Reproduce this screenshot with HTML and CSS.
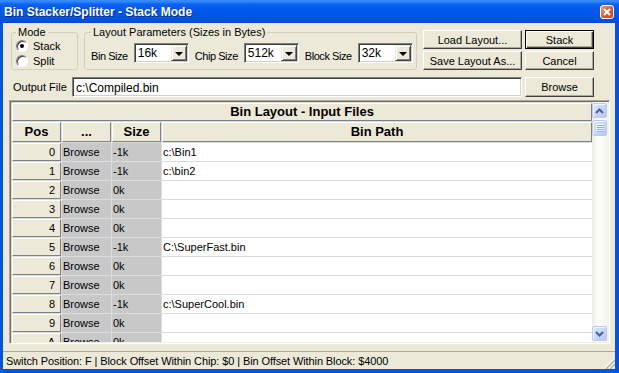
FILE: index.html
```html
<!DOCTYPE html>
<html lang="en">

<head>
    <meta charset="UTF-8">
    <title>Bin Stacker/Splitter - Stack Mode</title>
    <link rel="stylesheet" href="styles.css">
</head>

<body>
    <div class="window">
        <div class="titlebar">
            <span class="title">Bin Stacker/Splitter - Stack Mode</span>
            <span class="close">
                <svg width="12" height="12" viewBox="0 0 12 12">
                    <path d="M3 3 L9 9 M9 3 L3 9" stroke="#fff" stroke-width="2" fill="none" />
                </svg>
            </span>
        </div>

        <div class="client">
            <div class="top">
                <fieldset class="group mode">
                    <legend>Mode</legend>
                    <label class="radio"><span class="dot checked"></span>Stack</label>
                    <label class="radio"><span class="dot"></span>Split</label>
                </fieldset>

                <fieldset class="group params">
                    <legend>Layout Parameters (Sizes in Bytes)</legend>
                    <div class="param-row">
                        <span class="param-label">Bin Size</span>
                        <div class="combo"><span class="val">16k</span><span class="drop"></span></div>
                        <span class="param-label">Chip Size</span>
                        <div class="combo"><span class="val">512k</span><span class="drop"></span></div>
                        <span class="param-label">Block Size</span>
                        <div class="combo"><span class="val">32k</span><span class="drop"></span></div>
                    </div>
                </fieldset>

                <div class="actions">
                    <button class="btn">Load Layout...</button>
                    <button class="btn default">Stack</button>
                    <button class="btn">Save Layout As...</button>
                    <button class="btn">Cancel</button>
                </div>
            </div>

            <div class="output">
                <span class="output-label">Output File</span>
                <div class="field">c:\Compiled.bin</div>
                <button class="btn browse">Browse</button>
            </div>

            <div class="gridframe">
                <div class="grid">
                    <div class="caption">Bin Layout - Input Files</div>
                    <div class="row head">
                        <div>Pos</div>
                        <div>...</div>
                        <div>Size</div>
                        <div>Bin Path</div>
                    </div>
                    <div class="row"><div class="pos">0</div><div class="gray">Browse</div><div class="gray">-1k</div><div class="path">c:\Bin1</div></div>
                    <div class="row"><div class="pos">1</div><div class="gray">Browse</div><div class="gray">-1k</div><div class="path">c:\bin2</div></div>
                    <div class="row"><div class="pos">2</div><div class="gray">Browse</div><div class="gray">0k</div><div class="path"></div></div>
                    <div class="row"><div class="pos">3</div><div class="gray">Browse</div><div class="gray">0k</div><div class="path"></div></div>
                    <div class="row"><div class="pos">4</div><div class="gray">Browse</div><div class="gray">0k</div><div class="path"></div></div>
                    <div class="row"><div class="pos">5</div><div class="gray">Browse</div><div class="gray">-1k</div><div class="path">C:\SuperFast.bin</div></div>
                    <div class="row"><div class="pos">6</div><div class="gray">Browse</div><div class="gray">0k</div><div class="path"></div></div>
                    <div class="row"><div class="pos">7</div><div class="gray">Browse</div><div class="gray">0k</div><div class="path"></div></div>
                    <div class="row"><div class="pos">8</div><div class="gray">Browse</div><div class="gray">-1k</div><div class="path">c:\SuperCool.bin</div></div>
                    <div class="row"><div class="pos">9</div><div class="gray">Browse</div><div class="gray">0k</div><div class="path"></div></div>
                    <div class="row"><div class="pos">A</div><div class="gray">Browse</div><div class="gray">0k</div><div class="path"></div></div>
                </div>

                <div class="vscroll">
                    <span class="sbtn">
                        <svg width="9" height="6" viewBox="0 0 9 6"><path d="M1 5 L4.5 1.5 L8 5" stroke="#4D6185" stroke-width="2" fill="none" /></svg>
                    </span>
                    <span class="thumb">
                        <svg width="8" height="8" viewBox="0 0 8 8">
                            <path d="M0 0.5 H8 M0 2.5 H8 M0 4.5 H8 M0 6.5 H8" stroke="#EEF4FE" stroke-width="1" />
                            <path d="M1 1.5 H8 M1 3.5 H8 M1 5.5 H8 M1 7.5 H8" stroke="#8CB0F8" stroke-width="1" />
                        </svg>
                    </span>
                    <span class="track"></span>
                    <span class="sbtn">
                        <svg width="9" height="6" viewBox="0 0 9 6"><path d="M1 1 L4.5 4.5 L8 1" stroke="#4D6185" stroke-width="2" fill="none" /></svg>
                    </span>
                </div>
            </div>

            <div class="status">
                <span class="status-text">Switch Position: F | Block Offset Within Chip: $0 | Bin Offset Within Block: $4000</span>
                <svg class="grip" width="12" height="12" viewBox="0 0 12 12">
                    <path d="M11 2 L2 11 M11 6 L6 11 M11 10 L10 11" stroke="#fff" stroke-width="1" />
                    <path d="M12 3 L3 12 M12 7 L7 12" stroke="#ACA899" stroke-width="1.2" />
                </svg>
            </div>
        </div>
    </div>
</body>

</html>
```

FILE: styles.css
```css
body {
    margin: 0;
    font-family: "Liberation Sans", Arial, sans-serif;
    font-size: 11px;
    color: #000;
}

.window {
    width: 619px;
    height: 373px;
    display: flex;
    flex-direction: column;
    background: #0054E3;
    overflow: hidden;
}

.titlebar {
    height: 23px;
    flex: none;
    display: flex;
    align-items: center;
    justify-content: space-between;
    padding: 1px 5px 0 4px;
    box-sizing: border-box;
    background: linear-gradient(#3A8DFB 0, #2C83FA 2px, #0E63F2 4px, #0058EE 9px, #0055E6 17px, #004BDD 23px);
    color: white;
}

.title {
    font-weight: bold;
    font-size: 12px;
    text-shadow: 1px 1px #0A2B8C;
}

.close {
    width: 12px;
    height: 12px;
    border: 1px solid white;
    border-radius: 3px;
    display: flex;
    background: linear-gradient(135deg, #F2A488 0, #E2603A 45%, #C9401A 100%);
}

.client {
    flex: 1;
    margin: 0 4px 4px 3px;
    background: #ECE9D8;
    display: flex;
    flex-direction: column;
}

/* top controls */

.top {
    display: flex;
    align-items: flex-start;
    margin: 3px 0 0 8px;
    height: 44px;
}

.group {
    margin: 0;
    border: 1px solid #D0D0BF;
    border-radius: 3px;
    height: 44px;
    box-sizing: border-box;
    min-width: 0;
}

.group legend {
    padding: 0 2px;
    line-height: 13px;
}

.mode {
    width: 67px;
    padding: 0 4px;
}

.params {
    width: 333px;
    margin-left: 6px;
    padding: 0 6px;
}

.radio {
    display: flex;
    align-items: center;
    gap: 5px;
    height: 15px;
}

.radio:first-of-type {
    margin-top: -1px;
}

.dot {
    width: 12px;
    height: 12px;
    box-sizing: border-box;
    border-radius: 50%;
    border: 1px solid;
    border-color: #808080 #fff #fff #808080;
    background: white;
    box-shadow: inset 1px 1px #404040;
    display: flex;
    align-items: center;
    justify-content: center;
}

.dot.checked::after {
    content: "";
    width: 4px;
    height: 4px;
    border-radius: 50%;
    background: black;
}

.param-row {
    display: flex;
    align-items: flex-end;
    margin-top: 4px;
}

.param-label {
    flex: none;
    white-space: nowrap;
    line-height: 13px;
    letter-spacing: -0.45px;
    margin-right: 6px;
}

.combo {
    flex: none;
    width: 55px;
    height: 20px;
    box-sizing: border-box;
    border: 1px solid;
    border-color: #808080 #fff #fff #808080;
    box-shadow: inset 1px 1px #404040, inset -1px -1px #D4D0C8;
    background: white;
    display: flex;
    align-items: center;
    padding: 1px;
    margin-right: 6px;
}

.combo:last-child {
    margin-right: 0;
}

.combo .val {
    flex: 1;
    padding-left: 2px;
    font-size: 12px;
}

.drop {
    width: 16px;
    height: 16px;
    box-sizing: border-box;
    background: #ECE9D8;
    border: 1px solid;
    border-color: #ECE9D8 #404040 #404040 #ECE9D8;
    box-shadow: inset 1px 1px #fff, inset -1px -1px #808080;
    display: flex;
    align-items: center;
    justify-content: center;
}

.drop::after {
    content: "";
    border-left: 4px solid transparent;
    border-right: 4px solid transparent;
    border-top: 4px solid black;
    margin-top: 1px;
}

.actions {
    display: grid;
    grid-template-columns: 99px 69px;
    grid-template-rows: 19px 19px;
    gap: 2px 3px;
    margin: 4px 0 0 6px;
}

.btn {
    font: inherit;
    color: black;
    background: #ECE9D8;
    border: 1px solid;
    border-color: #fff #404040 #404040 #fff;
    box-shadow: inset -1px -1px #ACA899;
    padding: 0;
    height: 19px;
}

.btn.default {
    border-color: black;
    box-shadow: inset 1px 1px #fff, inset -1px -1px #404040, inset -2px -2px #ACA899;
}

/* output file */

.output {
    display: flex;
    align-items: center;
    margin: 7px 0 0 10px;
    height: 20px;
}

.output-label {
    width: 59px;
}

.field {
    width: 450px;
    height: 20px;
    box-sizing: border-box;
    border: 1px solid;
    border-color: #808080 #fff #fff #808080;
    box-shadow: inset 1px 1px #404040, inset -1px -1px #D4D0C8;
    background: white;
    padding: 3px 3px;
    font-size: 12px;
}

.browse {
    width: 69px;
    height: 20px;
    margin-left: 3px;
}

/* grid */

.gridframe {
    margin: 3px 5px 0 6px;
    height: 244px;
    box-sizing: border-box;
    border: 1px solid;
    border-color: #ACA899 #fff #fff #ACA899;
    box-shadow: inset 1px 1px #716F64, inset -1px -1px #F1EFE2;
    padding: 1px;
    display: flex;
}

.grid {
    flex: 1;
    display: flex;
    flex-direction: column;
    gap: 1px;
    padding: 1px 0 0 1px;
    background: #DCDCDC;
    overflow: hidden;
}

.caption,
.row.head div,
.pos {
    background: #ECE9D8;
    border: 1px solid;
    border-color: #fff #808080 #808080 #fff;
    box-sizing: border-box;
}

.caption {
    flex: none;
    height: 18px;
    line-height: 16px;
    text-align: center;
    font-weight: bold;
    font-size: 13px;
}

.row {
    flex: none;
    display: grid;
    grid-template-columns: 49px 49px 49px 1fr;
    column-gap: 1px;
    height: 18px;
    line-height: 18px;
}

.row.head {
    height: 20px;
}

.row.head div {
    text-align: center;
    font-weight: bold;
    font-size: 13px;
    line-height: 18px;
}

.pos {
    text-align: right;
    padding-right: 5px;
    line-height: 16px;
}

.gray {
    background: #C8C8C8;
    padding-left: 1px;
}

.path {
    background: white;
    padding-left: 1px;
}

/* scrollbar */

.vscroll {
    width: 16px;
    display: flex;
    flex-direction: column;
    padding: 1px 1px 1px 0;
    box-sizing: border-box;
    background: linear-gradient(to right, #EEEDE5, #FDFDFA 40%, #F4F3EE);
}

.sbtn,
.thumb {
    width: 15px;
    height: 15px;
    box-sizing: border-box;
    border: 1px solid #B9CBF3;
    border-radius: 2px;
    background: linear-gradient(135deg, #DCE7FE, #C3D4FB 60%, #B4C8F6);
    box-shadow: inset 1px 1px #F0F4FE;
    display: flex;
    align-items: center;
    justify-content: center;
}

.thumb {
    height: 16px;
    margin-top: 2px;
}

.track {
    flex: 1;
}

/* status bar */

.status {
    margin-top: 7px;
    height: 18px;
    box-sizing: border-box;
    border-top: 1px solid #ACA899;
    display: flex;
    align-items: center;
    justify-content: space-between;
    padding-left: 3px;
}

.status-text {
    letter-spacing: -0.1px;
}

.grip {
    align-self: flex-end;
}
```
